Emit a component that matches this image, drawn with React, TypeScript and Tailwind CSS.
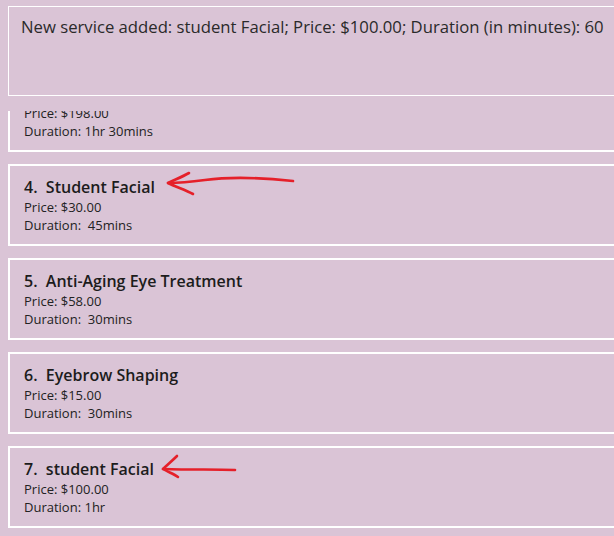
const services = [
  { no: 3, name: "Signature Facial", price: "$198.00", duration: "1hr 30mins" },
  { no: 4, name: "Student Facial", price: "$30.00", duration: " 45mins" },
  { no: 5, name: "Anti-Aging Eye Treatment", price: "$58.00", duration: " 30mins" },
  { no: 6, name: "Eyebrow Shaping", price: "$15.00", duration: " 30mins" },
  { no: 7, name: "student Facial", price: "$100.00", duration: "1hr" },
];

const ServiceCard = ({ s }: { s: (typeof services)[number] }) => {
  return (
    <div className="w-[640px] border-2 border-white pl-[14px] pt-[10px] pb-[10px] mb-[12px] whitespace-pre">
      <div className="text-[16px] leading-[22px] font-semibold text-[#1c1c1c]">
        {s.no}.{"  "}{s.name}
      </div>
      <div className="text-[13px] leading-[18px] text-[#222]">Price: {s.price}</div>
      <div className="text-[13px] leading-[18px] text-[#222]">Duration: {s.duration}</div>
    </div>
  );
};

export default function App() {
  return (
    <div
      className="relative w-[614px] h-[536px] overflow-hidden bg-[#dac4d6] pl-[8px] pt-[6px]"
      style={{ fontFamily: '"Open Sans", "Noto Sans", sans-serif' }}
    >
      <div className="w-[640px] h-[90px] border border-white pl-[12px] pt-[9px]">
        <p className="text-[16.7px] leading-[22px] text-[#2a2a2a] whitespace-nowrap">
          New service added: student Facial; Price: $100.00; Duration (in minutes): 60
        </p>
      </div>

      <div className="mt-[15px] h-[430px] overflow-hidden">
        <div className="-mt-[41px]">
          {services.map((s) => (
            <ServiceCard key={s.no} s={s} />
          ))}
        </div>
      </div>

      {/* red annotation arrows */}
      <svg className="absolute left-0 top-0 pointer-events-none" width="614" height="536">
        <g fill="none" stroke="#e5202a" strokeWidth="2.6" strokeLinecap="round" strokeLinejoin="round">
          <path d="M293 181 C 265 178, 235 176, 205 180 C 190 182, 178 183, 168 183" />
          <path d="M189 173 C 182 177, 174 180, 168 183 C 176 187, 186 190, 193 194" />
          <path d="M235 470 C 215 469, 195 470, 163 469" />
          <path d="M177 456 C 172 461, 167 465, 163 469 C 168 472, 174 474, 178 477" />
        </g>
      </svg>
    </div>
  );
}
